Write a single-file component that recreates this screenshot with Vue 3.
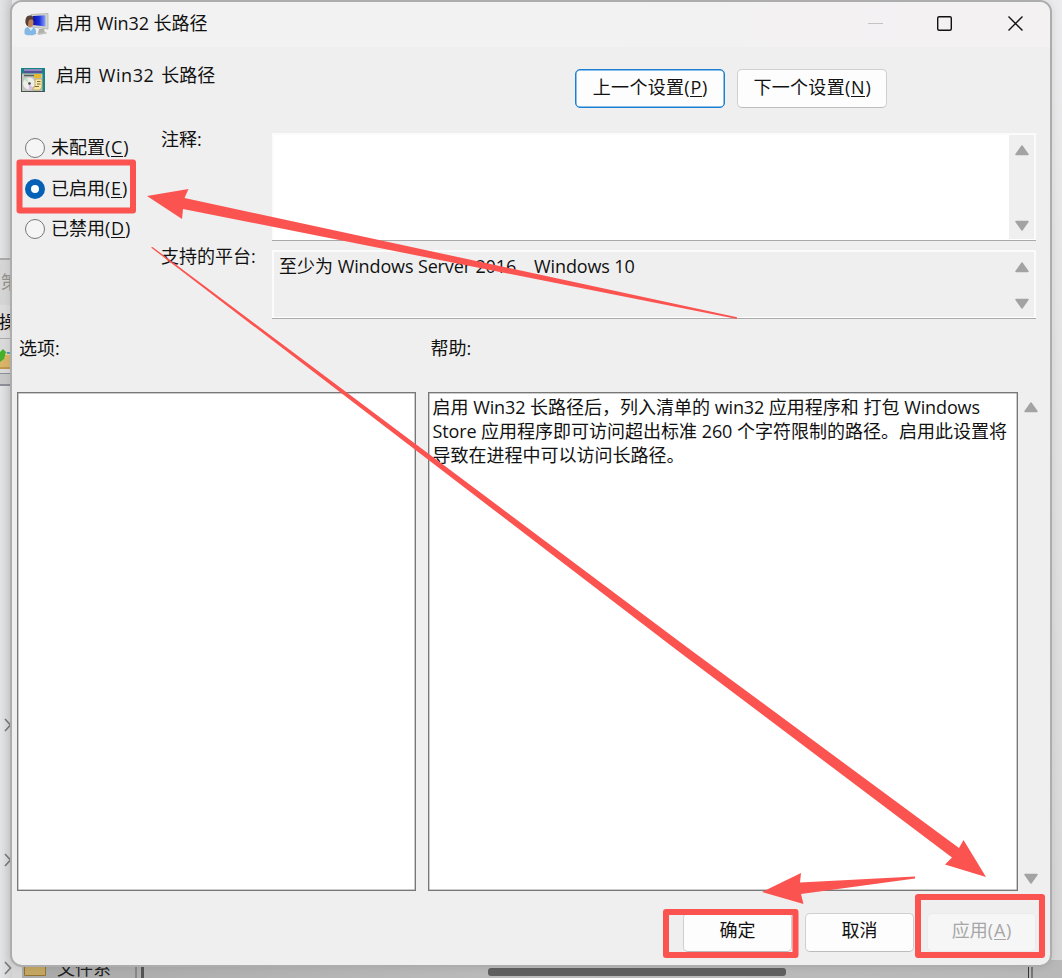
<script setup>
const radios = [
  { text: '未配置', key: 'C', on: false },
  { text: '已启用', key: 'E', on: true },
  { text: '已禁用', key: 'D', on: false },
]
</script>

<template>
  <div class="desktop">
    <div class="back-left">
      <div class="back-title"><span>策</span></div>
      <div class="back-menu"><span>操</span></div>
      <div class="back-tools">
        <svg width="12" height="28" viewBox="0 0 12 28">
          <path d="M0 11h12v17H0z" fill="#d9b56b" />
          <path d="M0 13h12" stroke="#f0d79b" stroke-width="2" />
          <path d="M0 27h12" stroke="#a87c2c" />
          <path d="M0 11l3-3 3 3-2 7-4 3z" fill="#45b02e" />
          <path d="M7 12h5" stroke="#4e9ccb" stroke-width="2" />
        </svg>
      </div>
      <div class="back-strip"></div>
    </div>
    <svg class="chevrons" width="12" height="264" viewBox="0 0 12 264" fill="none" stroke="#777" stroke-width="1.6">
      <path d="M5 5l5.500 6L5 17M5 140l5.500 6L5 152M5 248l5.500 6L5 260" />
    </svg>
    <div class="back-bottom">
      <svg class="folder" width="22" height="14" viewBox="0 0 22 14">
        <path d="M.5 0h21v11.500H.5z" fill="#c4a763" stroke="#927331" />
      </svg>
      <span class="back-file">文件系</span>
      <i class="split"></i>
      <i class="thumb"></i>
      <i class="edge"></i>
    </div>

    <div class="window">
      <header class="titlebar">
        <svg width="25" height="23" viewBox="0 0 25 23">
          <defs>
            <linearGradient id="scr" x1="0" y1="0" x2="1" y2="0">
              <stop offset="0" stop-color="#0b12a8" /><stop offset=".5" stop-color="#1e30dc" /><stop offset="1" stop-color="#8aa4f4" />
            </linearGradient>
          </defs>
          <path d="M7 1.500L24 .5v15.500L8 14z" fill="#d4d5cf" stroke="#a9aba6" stroke-width=".7" />
          <path d="M9 3l12.500-.8v11.300L9 12z" fill="url(#scr)" />
          <path d="M15 16h5l1 4h-7z" fill="#aeb0ac" />
          <path d="M12 20.500l10-1.500 1 1.500-8 1.500z" fill="#c0c1bd" />
          <path d="M.5 21v-3c0-3 2.500-4.500 5.500-4.500s6 2 6 5V21l-3 1.300H3z" fill="#83b8e6" />
          <path d="M4 14l3 4 2.500-3.500z" fill="#d9eefc" />
          <ellipse cx="6" cy="9.500" rx="3.500" ry="5" fill="#c08358" />
          <path d="M1.500 10C1 5 3 2 6 2.500c3 0 4 2 3 4.500-3-1-4 0-4.500 1.500L4 13c-1 0-2-1-2.500-3z" fill="#594137" />
        </svg>
        <span class="title">启用 <b>Win32</b> 长路径</span>
        <svg class="controls" width="160" height="20" viewBox="0 0 160 20" fill="none">
          <path d="M0 9.500h15" stroke="#c3c3c3" />
          <rect x="69.700" y="2.700" width="13.600" height="13.600" rx="1.500" stroke="#111" stroke-width="1.400" />
          <path d="M140.500 2.500l14 14M154.500 2.500l-14 14" stroke="#111" stroke-width="1.400" />
        </svg>
      </header>

      <section class="heading">
        <svg width="24" height="24" viewBox="0 0 24 24">
          <path d="M0 0h24v24H0z" fill="#178383" />
          <path d="M0 5h1.500v19H0z" fill="#4f5a55" />
          <path d="M3 1h18v4H3z" fill="#55509a" />
          <path d="M3 2h18" stroke="#c4c2e0" />
          <path d="M1 5.500h20.500V23H1z" fill="#c4c6be" />
          <path d="M3 7.500h17" stroke="#525f5a" stroke-width="1.500" />
          <path d="M13 6h7v4h-7z" fill="#e7b72c" />
          <circle cx="8" cy="15.500" r="6.500" fill="#ededea" stroke="#a8a8a8" stroke-width=".5" />
          <path d="M8 15.500L3 11.500a7 7 0 0 1 3-2z" fill="#bfe4c3" />
          <path d="M8 15.500l4 4.500a7 7 0 0 1-4 2z" fill="#d8bdea" />
          <circle cx="8.500" cy="15.500" r="1.300" fill="#444" />
          <path d="M14 11h7v8l-2 3h-7v-3h2z" fill="#f6e7a5" stroke="#a48b4d" stroke-width=".6" />
          <path d="M16 13.500h3.500M16 16h3.500M14 18.500h4" stroke="#7a693e" />
          <path d="M0 23.500h24" stroke="#4b514c" />
        </svg>
        <span class="policy">启用 <b>Win32</b> 长路径</span>
        <button class="btn nav focus">上一个设置<b class="key">(<u>P</u>)</b></button>
        <button class="btn nav">下一个设置<b class="key">(<u>N</u>)</b></button>
      </section>

      <section class="state">
        <div class="radios">
          <label v-for="r in radios" :key="r.key" class="radio">
            <i :class="{ on: r.on }"></i><span>{{ r.text }}<b class="key">(<u>{{ r.key }}</u>)</b></span>
          </label>
        </div>
        <div class="labels"><span>注释:</span><span>支持的平台:</span></div>
        <div class="fields">
          <div class="field comment">
            <div class="sb">
              <svg width="16" height="12" viewBox="0 0 16 12"><path d="M8 2l6 8.500H2z" /></svg>
              <svg width="16" height="12" viewBox="0 0 16 12"><path d="M2 1.500h12L8 10z" /></svg>
            </div>
          </div>
          <div class="field platform">
            <span class="plat-text">至少为 <b>Windows Server 2016</b><span class="gap"></span><b>Windows 10</b></span>
            <div class="sb">
              <svg width="16" height="12" viewBox="0 0 16 12"><path d="M8 2l6 8.500H2z" /></svg>
              <svg width="16" height="12" viewBox="0 0 16 12"><path d="M2 1.500h12L8 10z" /></svg>
            </div>
          </div>
        </div>
      </section>

      <section class="captions"><span>选项:</span><span>帮助:</span></section>

      <section class="panels">
        <div class="panel"></div>
        <div class="panel help">
          <p>启用 <b>Win32</b> 长路径后，列入清单的 <b>win32</b> 应用程序和 打包 <b>Windows</b></p>
          <p><b>Store</b> 应用程序即可访问超出标准 <b>260</b> 个字符限制的路径。启用此设置将</p>
          <p>导致在进程中可以访问长路径。</p>
        </div>
        <div class="sb bare">
          <svg width="16" height="12" viewBox="0 0 16 12"><path d="M8 2l6 8.500H2z" /></svg>
          <svg width="16" height="12" viewBox="0 0 16 12"><path d="M2 1.500h12L8 10z" /></svg>
        </div>
      </section>

      <footer class="actions">
        <button class="btn">确定</button>
        <button class="btn">取消</button>
        <button class="btn disabled">应用<b class="key">(<u>A</u>)</b></button>
      </footer>
    </div>

    <svg class="marks" width="1062" height="978" viewBox="0 0 1062 978">
      <g fill="none" stroke="#fb5350" stroke-width="6" stroke-linejoin="round">
        <rect x="19.500" y="162.500" width="113.500" height="48" />
        <rect x="666" y="912" width="129.500" height="43" />
        <rect x="918" y="897" width="124" height="58" />
      </g>
      <g fill="#fb5350">
        <path d="M147 196L188.500 189L184.500 198L737 317.300V319L183 209L182 219Z" />
        <path d="M151 247.500L152.500 247L690.700 650L959 848L963.500 840L986 877L945 864.500L952 857.500L676.700 650Z" />
        <path d="M762 892L801 873L800 882.500L915 876.500V878.500L801 894L803.500 904Z" />
      </g>
    </svg>
  </div>
</template>

<style>
html, body { margin: 0; overflow: hidden; }
</style>

<style scoped>
.desktop {
  position: relative; width: 1062px; height: 978px; overflow: hidden;
  background: linear-gradient(#ececee, #e2e2e2 45%, #d6d6d6);
  font: 18px/24px "Open Sans", "Noto Sans CJK SC", sans-serif; color: #111;
}
b { font-weight: 400; letter-spacing: -0.13px; }
.key { letter-spacing: .8px; margin-right: -1px; }
u { text-decoration: none; border-bottom: 1px solid currentColor; display: inline-block; line-height: 17px; }
.back-left { position: absolute; left: 0; top: 0; width: 12px; height: 978px; padding-top: 258px; box-sizing: border-box; background: linear-gradient(90deg, #e2e4e6, #d0d0d1); }
.back-left > div { overflow: hidden; }
.back-title { height: 47px; border-top: 2px solid #aaa; background: #d5d5d5; color: #929292; box-sizing: border-box; padding: 10px 0 0 1px; }
.back-menu { height: 33px; background: #dcdcdc; }
.back-menu span { display: block; margin: 5px 0 0 -1px; }
.back-tools { height: 34px; border-top: 1px solid #aaa; background: #dadada; }
.back-tools svg { display: block; margin-top: 2px; }
.back-strip { height: 10px; border: solid #8c9096; border-width: 1px 0 2px; background: #c8c8c8; }
.chevrons { position: absolute; left: 0; top: 714px; }
.back-bottom { position: absolute; left: 22px; right: 0; top: 960px; height: 18px; background: linear-gradient(90deg, #aaa, #bcbcbc 50%, #b8b8b8); display: flex; overflow: hidden; }
.folder { margin: 4px 0 0 2px; }
.back-file { margin: -4px 0 0 11px; width: 78px; white-space: nowrap; height: 24px; color: #222; }
.split { width: 4px; border-left: 2px solid #888; border-right: 3px solid #555; }
.thumb { margin: 8px 0 0 344px; width: 298px; height: 8px; border-radius: 3px; background: #606060; }
.edge { margin-left: 242px; width: 2px; border-left: 1px solid #333; border-right: 2px solid #777; }

.window {
  position: absolute; left: 10px; top: 0; width: 1042px; height: 967px; box-sizing: border-box;
  border: 2px solid #adadad; border-radius: 12px; background: #efefef; overflow: hidden;
  box-shadow: 0 0 8px rgba(0, 0, 0, .1);
  display: flex; flex-direction: column;
}
.titlebar { height: 45px; flex: none; background: linear-gradient(90deg, #f2f2f2 50%, #f4f1f3); display: flex; align-items: flex-start; padding: 11px 0 0 12px; box-sizing: border-box; }
.title { margin: -2px 0 0 7px; white-space: nowrap; }
.controls { margin: 1px 22px 0 auto; }
.heading { height: 86px; flex: none; display: flex; align-items: flex-start; padding: 21px 163px 0 9px; box-sizing: border-box; }
.policy { margin: -5px auto 0 11px; white-space: nowrap; }
.policy b { letter-spacing: .6px; margin: 0 2px; }
.btn {
  width: 109px; height: 39px; box-sizing: border-box; border: 1px solid #cfcfcf; border-bottom-color: #bcbcbc; border-radius: 5px;
  background: #fdfdfd; font: inherit; color: inherit; padding: 4px 0 0; display: flex; justify-content: center; align-items: flex-start; line-height: 24px; white-space: nowrap;
}
.nav { width: 150px; height: 39px; margin: 1px 0 0 12px; padding-top: 5px; letter-spacing: .3px; }
.nav:first-of-type { margin-left: 0; }
.focus { border: 1.500px solid #1b80d4; box-shadow: inset 0 0 0 .5px #1b80d4; }
.state { height: 188px; flex: none; display: flex; }
.radios { width: 149px; padding: 2px 0 0 13px; box-sizing: border-box; }
.radio { height: 40.600px; display: flex; align-items: flex-start; white-space: nowrap; }
.radio i { width: 20px; height: 20px; margin: 3px 6px 0 0; box-sizing: border-box; border: 1.500px solid #777; border-radius: 50%; background: #f5f5f5; flex: none; }
.radio i.on { border: 6px solid #0560b6; background: #fff; }
.labels { width: 111px; display: flex; flex-direction: column; gap: 93px; margin-top: -6px; white-space: nowrap; }
.fields { width: 764px; }
.field { box-sizing: border-box; border: 2px solid #fbfbfb; border-bottom: 0; box-shadow: 0 1px #fff, 0 2px #a9a9a9; display: flex; justify-content: flex-end; }
.comment { height: 106px; background: #fff; }
.platform { height: 67px; margin-top: 11px; justify-content: space-between; }
.plat-text { margin: 2px 0 0 5px; white-space: nowrap; }
.gap { display: inline-block; width: 18px; }
.sb { width: 25px; box-sizing: border-box; background: #efefef; display: flex; flex-direction: column; justify-content: space-between; align-items: center; padding: 9px 0 7px; }
.sb svg path { fill: #a3a3a3; stroke: #a3a3a3; stroke-width: 1.500; stroke-linejoin: round; }
.captions { height: 71px; flex: none; display: flex; padding: 15px 0 0 7px; box-sizing: border-box; }
.captions span { width: 411.500px; }
.panels { height: 499px; flex: none; display: flex; padding-left: 4.500px; }
.panel { width: 399px; box-sizing: border-box; border: 1.500px solid #777; background: #fff; box-shadow: inset 0 0 0 .5px #999; }
.help { width: 590px; margin-left: 12px; padding: 2px 0 0 4px; }
.help p { margin: 0; white-space: nowrap; height: 24.200px; }
.bare { width: 26px; padding: 9px 0 6px; }
.actions { display: flex; gap: 13px; padding: 22px 0 0 671px; }
.disabled { color: #a6a6a6; background: #f6f6f6; border-color: #ebebeb; }
.marks { position: absolute; left: 0; top: 0; }
</style>
